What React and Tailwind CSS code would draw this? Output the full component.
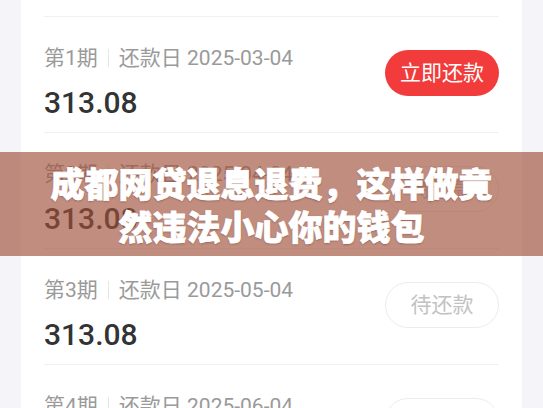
import React from 'react';

const rows = [
  { period: 0, date: '2025-02-04', status: 'done' },
  { period: 1, date: '2025-03-04', status: 'pay' },
  { period: 2, date: '2025-04-04', status: 'wait' },
  { period: 3, date: '2025-05-04', status: 'wait' },
  { period: 4, date: '2025-06-04', status: 'wait' },
];

const font = { fontFamily: 'Roboto, "Noto Sans CJK SC", sans-serif' };

const Row = ({ period, date, status }) => (
  <div className="h-[116px] border-b border-[#f1f1f4] flex items-start justify-between">
    <div className="pt-[29px] flex flex-col">
      <div className="flex items-center text-[21px] leading-[24px] text-[#9a9a9a]">
        <span>第{period}期</span>
        <span className="mx-[10px] w-px h-[18px] bg-[#e6e6e6]" />
        <span>还款日 {date}</span>
      </div>
      <div className="mt-[15px] text-[30px] leading-[36px] font-medium text-[#333333]">313.08</div>
    </div>
    {status === 'pay' && (
      <button className="mt-[33px] w-[114px] h-[46px] rounded-full bg-[#f23b3b] text-white text-[21px] leading-none">
        立即还款
      </button>
    )}
    {status === 'wait' && (
      <button className="mt-[33px] w-[114px] h-[46px] rounded-full border border-[#ececef] bg-white text-[#c2c2c2] text-[21px] leading-none">
        待还款
      </button>
    )}
  </div>
);

export default function App() {
  return (
    <div className="relative w-[543px] h-[408px] overflow-hidden bg-[#f4f4f9]" style={font}>
      <div className="mx-[21px] bg-white px-[23px] mt-[-99px]">
        {rows.map((r) => (
          <Row key={r.period} {...r} />
        ))}
      </div>

      <div className="absolute left-0 right-0 top-[152px] h-[104px] bg-[#a0503a]/65 flex flex-col items-center justify-center">
        <div
          className="text-white font-black text-[34px] leading-[43px] text-center [-webkit-text-stroke:0.8px_white] [text-shadow:0_1px_2px_rgba(80,30,20,0.45)]"
          style={{ fontFamily: '"Noto Sans CJK SC", sans-serif' }}
        >
          <div>成都网贷退息退费，这样做竟</div>
          <div>然违法小心你的钱包</div>
        </div>
      </div>
    </div>
  );
}
